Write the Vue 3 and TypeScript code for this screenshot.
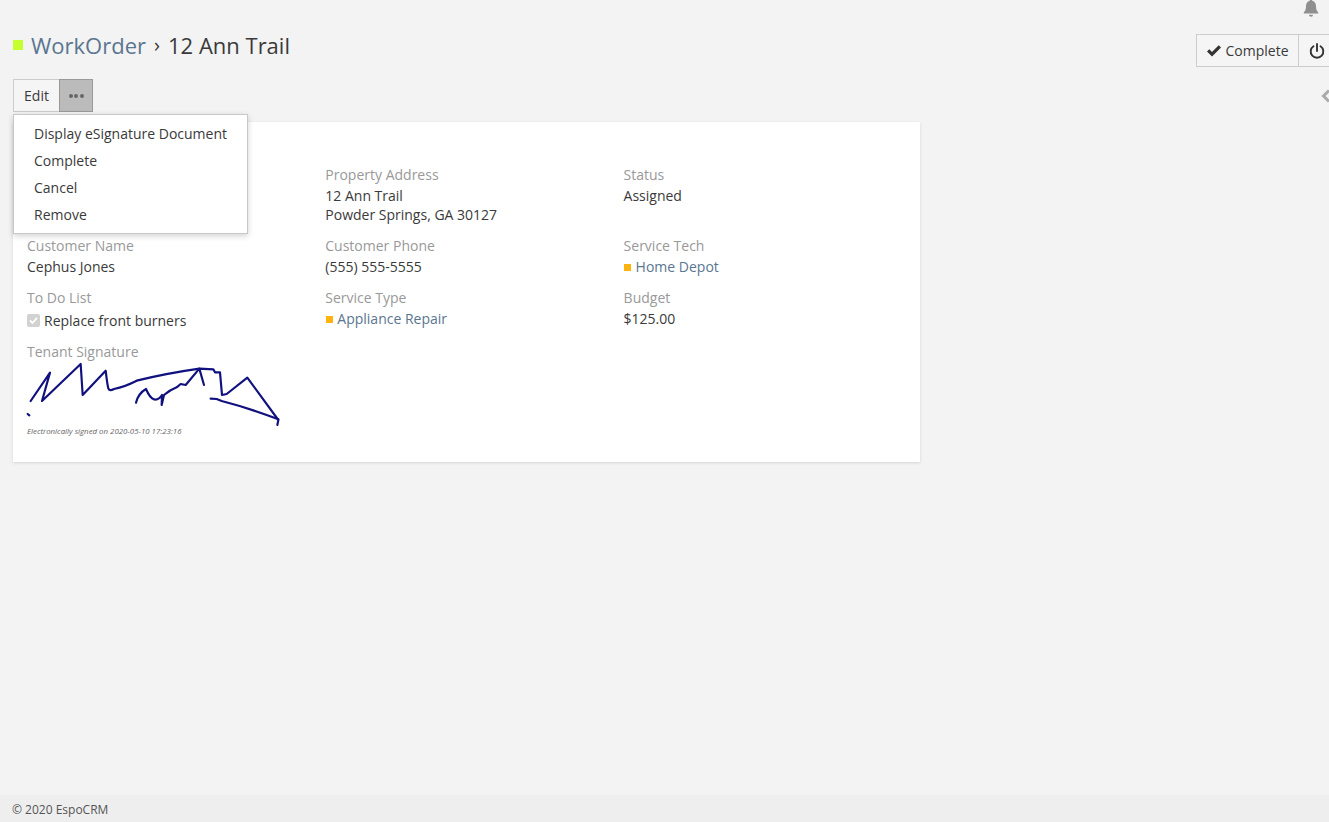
<script setup lang="ts">
interface Field {
  label: string;
  lines?: string[];
  link?: string;
  check?: string;
}

const fields: Field[] = [
  { label: '' },
  { label: 'Property Address', lines: ['12 Ann Trail', 'Powder Springs, GA 30127'] },
  { label: 'Status', lines: ['Assigned'] },
  { label: 'Customer Name', lines: ['Cephus Jones'] },
  { label: 'Customer Phone', lines: ['(555) 555-5555'] },
  { label: 'Service Tech', link: 'Home Depot' },
  { label: 'To Do List', check: 'Replace front burners' },
  { label: 'Service Type', link: 'Appliance Repair' },
  { label: 'Budget', lines: ['$125.00'] },
];

const menuItems = ['Display eSignature Document', 'Complete', 'Cancel', 'Remove'];
</script>

<template>
  <div class="page">
    <div class="topbar">
      <svg class="bell" viewBox="0 0 16 18" width="16" height="18" aria-hidden="true">
        <path d="M8 0.5c.8 0 1.2.5 1.2 1.2 2.6.6 3.8 2.7 3.8 5.3 0 3.4.8 5 2.2 6.3v1.2H.8v-1.2C2.2 12 3 10.400 3 7c0-2.600 1.200-4.700 3.800-5.300C6.800 1 7.200.5 8 .5z" fill="#8f8f8f" />
        <path d="M6 15.800h4a2 2 0 0 1-4 0z" fill="#8f8f8f" />
      </svg>
    </div>

    <header class="head">
      <h1 class="title">
        <span class="square lime"></span>
        <a class="crumb">WorkOrder</a>
        <span class="sep">›</span>
        <span>12 Ann Trail</span>
      </h1>
      <div class="head-actions">
        <button class="btn complete" type="button">
          <svg viewBox="0 0 16 14" width="16" height="14" aria-hidden="true">
            <path d="M1 7.500 3.300 5.200 6 7.900 12.700 1.200 15 3.500 6 12.500z" fill="#333" />
          </svg>
          Complete
        </button>
        <button class="btn cancel" type="button">
          <svg viewBox="0 0 16 16" width="16" height="16" aria-hidden="true">
            <path d="M4.500 3.200a6.300 6.300 0 1 0 7 0M8 1v7" fill="none" stroke="#333" stroke-width="1.900" stroke-linecap="round" />
          </svg>
          <span>Cancel</span>
        </button>
      </div>
    </header>

    <div class="actions">
      <div class="btn-group">
        <button class="btn edit" type="button">Edit</button>
        <button class="btn more" type="button" aria-label="More">
          <span></span><span></span><span></span>
        </button>
        <ul class="menu">
          <li v-for="item in menuItems" :key="item">{{ item }}</li>
        </ul>
      </div>
      <svg class="collapse" viewBox="0 0 10 14" width="10" height="14" aria-hidden="true">
        <path d="M8 1.500 2.500 7 8 12.500" fill="none" stroke="#aaa" stroke-width="3" />
      </svg>
    </div>

    <section class="card">
      <div class="grid">
        <div v-for="(f, i) in fields" :key="i" class="cell">
          <div class="label">{{ f.label }}</div>
          <div v-for="line in f.lines" :key="line" class="value">{{ line }}</div>
          <div v-if="f.link" class="value">
            <span class="square orange"></span><a class="link">{{ f.link }}</a>
          </div>
          <label v-if="f.check" class="check">
            <span class="box">
              <svg viewBox="0 0 13 13" width="13" height="13" aria-hidden="true">
                <path d="M3 6.500 5.500 9 10 3.800" fill="none" stroke="#fff" stroke-width="1.800" />
              </svg>
            </span>
            {{ f.check }}
          </label>
        </div>
      </div>

      <div class="signature">
        <div class="label">Tenant Signature</div>
        <svg class="sig" viewBox="51 69 780 192" width="260" height="64" aria-hidden="true">
          <g fill="none" stroke="#10107f" stroke-width="6.500" stroke-linecap="round" stroke-linejoin="round">
            <path d="M62 183 120 98 96 183 212 72 218 165 287 92Q292 135 295 145T312 147Q345 140 380 122Q470 100 568 86L610 88 615 97 630 97 636 165 650 162 712 113 805 240 802 255" />
            <path d="M805 238Q720 205 635 183L620 177 602 176" />
            <path d="M378 188Q385 160 408 147Q420 175 432 178Q445 182 456 165L455 195 462 165Q480 150 500 142L512 132 527 135 568 86 582 135" />
            <path d="M53 222 58 226" />
          </g>
        </svg>
        <div class="signed">Electronically signed on 2020-05-10 17:23:16</div>
      </div>
    </section>

    <footer class="footer">© 2020 EspoCRM</footer>
  </div>
</template>

<style>
html, body {
  margin: 0;
  background: #f3f3f3;
  overflow: hidden;
}
</style>

<style scoped>
.page {
  position: relative;
  height: 822px;
  width: 1329px;
  overflow: hidden;
  display: flex;
  flex-direction: column;
  font-family: "Open Sans", "Liberation Sans", sans-serif;
  font-size: 14px;
  line-height: 19px;
  color: #3a3a3a;
  background: #f3f3f3;
}
.topbar {
  height: 19px;
  display: flex;
  justify-content: flex-end;
  padding-right: 10px;
}
.bell { margin-top: -1px; }
.head {
  display: flex;
  justify-content: space-between;
  align-items: flex-start;
  height: 60px;
  padding-left: 13px;
}
.title {
  margin: 9px 0 0;
  font-size: 22px;
  font-weight: 400;
  line-height: 34px;
  display: flex;
  align-items: center;
}
.square {
  display: inline-block;
  width: 7px;
  height: 7px;
}
.lime {
  width: 10px;
  height: 10px;
  background: #c6ff2e;
  margin-right: 8px;
}
.orange {
  background: #ffb30f;
  margin: 0 4.500px 1px 0.500px;
  vertical-align: middle;
}
.crumb { color: #5a7690; }
.sep { margin: 0 8px; font-size: 20px; }
.head-actions {
  display: flex;
  width: 133px;
  margin-top: 15px;
  overflow: hidden;
  flex: none;
}
.btn {
  font: inherit;
  color: #3a3a3a;
  background: #f5f5f5;
  border: 1px solid #ccc;
  height: 33px;
  padding: 0;
  box-sizing: border-box;
  display: inline-flex;
  align-items: center;
  justify-content: center;
  white-space: nowrap;
}
.complete {
  width: 103px;
  gap: 3px;
  flex: none;
}
.cancel {
  margin-left: -1px;
  padding-left: 10px;
  gap: 4px;
  flex: none;
  justify-content: flex-start;
  color: #8a4a3f;
  border-right: none;
}
.actions {
  display: flex;
  justify-content: space-between;
  align-items: center;
  height: 33px;
  padding-left: 13px;
}
.btn-group {
  position: relative;
  display: flex;
}
.edit { width: 47px; }
.more {
  width: 34px;
  margin-left: -1px;
  gap: 1.500px;
  background: #bbbbbb;
  border-color: #999999;
}
.more span {
  width: 4px;
  height: 4px;
  border-radius: 50%;
  background: #666;
}
.collapse {
  margin-right: -2px;
}
.menu {
  position: absolute;
  top: 35px;
  left: 0;
  z-index: 2;
  width: 235px;
  box-sizing: border-box;
  margin: 0;
  padding: 5px 0;
  list-style: none;
  background: #fff;
  border: 1px solid #c8c8c8;
  box-shadow: 0 2px 6px rgba(0, 0, 0, 0.18);
}
.menu li {
  height: 27px;
  line-height: 27px;
  padding-left: 20px;
  white-space: nowrap;
}
.card {
  width: 907px;
  height: 340px;
  box-sizing: border-box;
  margin: 10px 0 0 13px;
  padding: 43px 14px 0;
  background: #fff;
  box-shadow: 0 1px 3px rgba(0, 0, 0, 0.12);
}
.grid {
  display: grid;
  grid-template-columns: repeat(3, 298.300px);
  grid-template-rows: 71px 52px 54px;
}
.label {
  color: #999;
  margin-bottom: 2px;
  min-height: 19px;
}
.link { color: #5a7690; }
.check {
  display: flex;
  align-items: center;
  gap: 4px;
  margin-top: 4px;
}
.box {
  width: 13px;
  height: 13px;
  background: #d2d2d2;
  border-radius: 2px;
  display: inline-flex;
}
.signature .label { margin-bottom: 0; }
.sig {
  display: block;
  margin-top: 2px;
  overflow: visible;
}
.signed {
  font-size: 7.850px;
  font-style: italic;
  line-height: 12px;
  color: #666;
  margin-top: -2px;
}
.footer {
  margin-top: auto;
  height: 27px;
  line-height: 29px;
  padding-left: 12px;
  font-size: 12px;
  color: #555;
  background: #eeeeee;
}
</style>
